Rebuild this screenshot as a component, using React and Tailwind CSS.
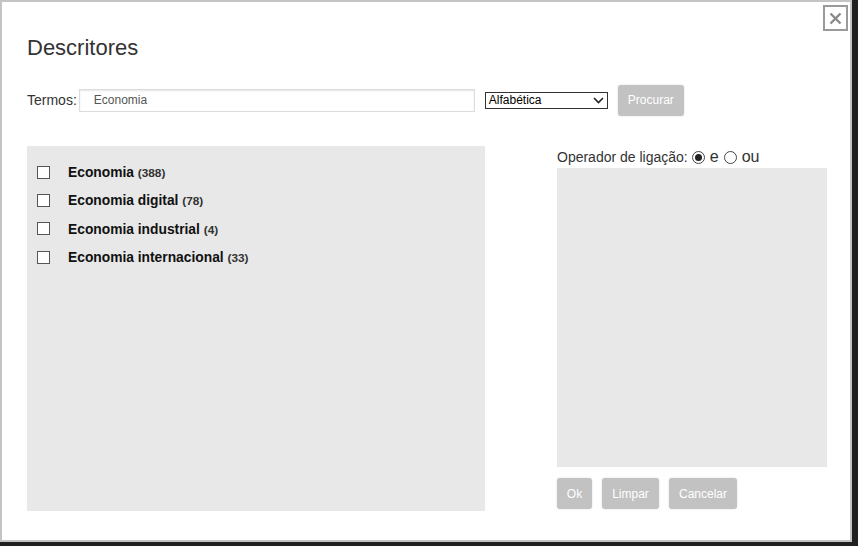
import React from "react";

const items = [
  ["Economia", "388"],
  ["Economia digital", "78"],
  ["Economia industrial", "4"],
  ["Economia internacional", "33"],
];

function Btn({ children, className = "" }) {
  return (
    <button
      className={
        "h-[31px] rounded-[3px] bg-[#c2c2c2] text-white text-[12px] shadow-[0_0_2px_rgba(0,0,0,0.15)] " +
        className
      }
    >
      {children}
    </button>
  );
}

export default function App() {
  return (
    <div
      className="w-[858px] h-[546px] bg-[#202020] overflow-hidden"
      style={{ fontFamily: '"Liberation Sans", Arial, sans-serif' }}
    >
      <div className="relative w-[852px] h-[542px] bg-white border-2 border-[#c4c4c4] pl-[25px] pt-[33px] text-[#333]">
        <button className="absolute right-[2px] top-[3px] w-[25px] h-[26px] border-2 border-[#9a9a9a] flex items-center justify-center bg-white">
          <svg width="13" height="13" viewBox="0 0 13 13">
            <path d="M1.5 1.5 L11.5 11.5 M11.5 1.5 L1.5 11.5" stroke="#8a8a8a" strokeWidth="2.4" />
          </svg>
        </button>

        <h1 className="text-[22px] leading-[25px] text-[#333]">Descritores</h1>

        <div className="flex items-center mt-[25px] h-[30px]">
          <span className="text-[14px] text-[#333] mr-[2px]">Termos:</span>
          <div className="w-[396px] h-[23px] border border-[#dcdcdc] shadow-[inset_0_1px_2px_rgba(0,0,0,0.1)] flex items-center pl-[14px] text-[12px] text-[#555]">
            Economia
          </div>
          <div className="ml-[10px] w-[123px] h-[17px] border border-[#333] flex items-center justify-between pl-[3px] pr-[3px] text-[12px] text-black bg-white">
            <span>Alfabética</span>
            <svg width="11" height="7" viewBox="0 0 11 7">
              <path d="M1 1 L5.5 5.5 L10 1" stroke="#222" strokeWidth="1.6" fill="none" />
            </svg>
          </div>
          <Btn className="ml-[10px] w-[66px] h-[30px]">Procurar</Btn>
        </div>

        <div className="flex mt-[31px]">
          <div className="w-[458px] h-[365px] bg-[#e8e8e8] pt-[12px] pl-[10px]">
            {items.map(([t, n]) => (
              <div key={t} className="flex items-center h-[28.4px]">
                <div className="w-[13px] h-[13px] border border-[#555] bg-white" />
                <span className="ml-[18px] text-[13.8px] font-bold text-[#111] relative top-[1px]">
                  {t} <span className="text-[11.8px] font-bold text-[#333]">({n})</span>
                </span>
              </div>
            ))}
          </div>

          <div className="ml-[72px] w-[270px] flex flex-col">
            <div className="flex items-center text-[14px] text-[#333] h-[22px]">
              <span>Operador de ligação:</span>
              <span className="ml-[4px] w-[13px] h-[13px] rounded-full border border-[#444] bg-white flex items-center justify-center">
                <span className="w-[7px] h-[7px] rounded-full bg-[#222]" />
              </span>
              <span className="ml-[5px] text-[16px]">e</span>
              <span className="ml-[5px] w-[13px] h-[13px] rounded-full border border-[#444] bg-white" />
              <span className="ml-[5px] text-[16px]">ou</span>
            </div>
            <div className="h-[299px] bg-[#e8e8e8]" />
            <div className="flex mt-[11px] gap-[10px]">
              <Btn className="w-[35px]">Ok</Btn>
              <Btn className="w-[57px]">Limpar</Btn>
              <Btn className="w-[68px]">Cancelar</Btn>
            </div>
          </div>
        </div>
      </div>
    </div>
  );
}
